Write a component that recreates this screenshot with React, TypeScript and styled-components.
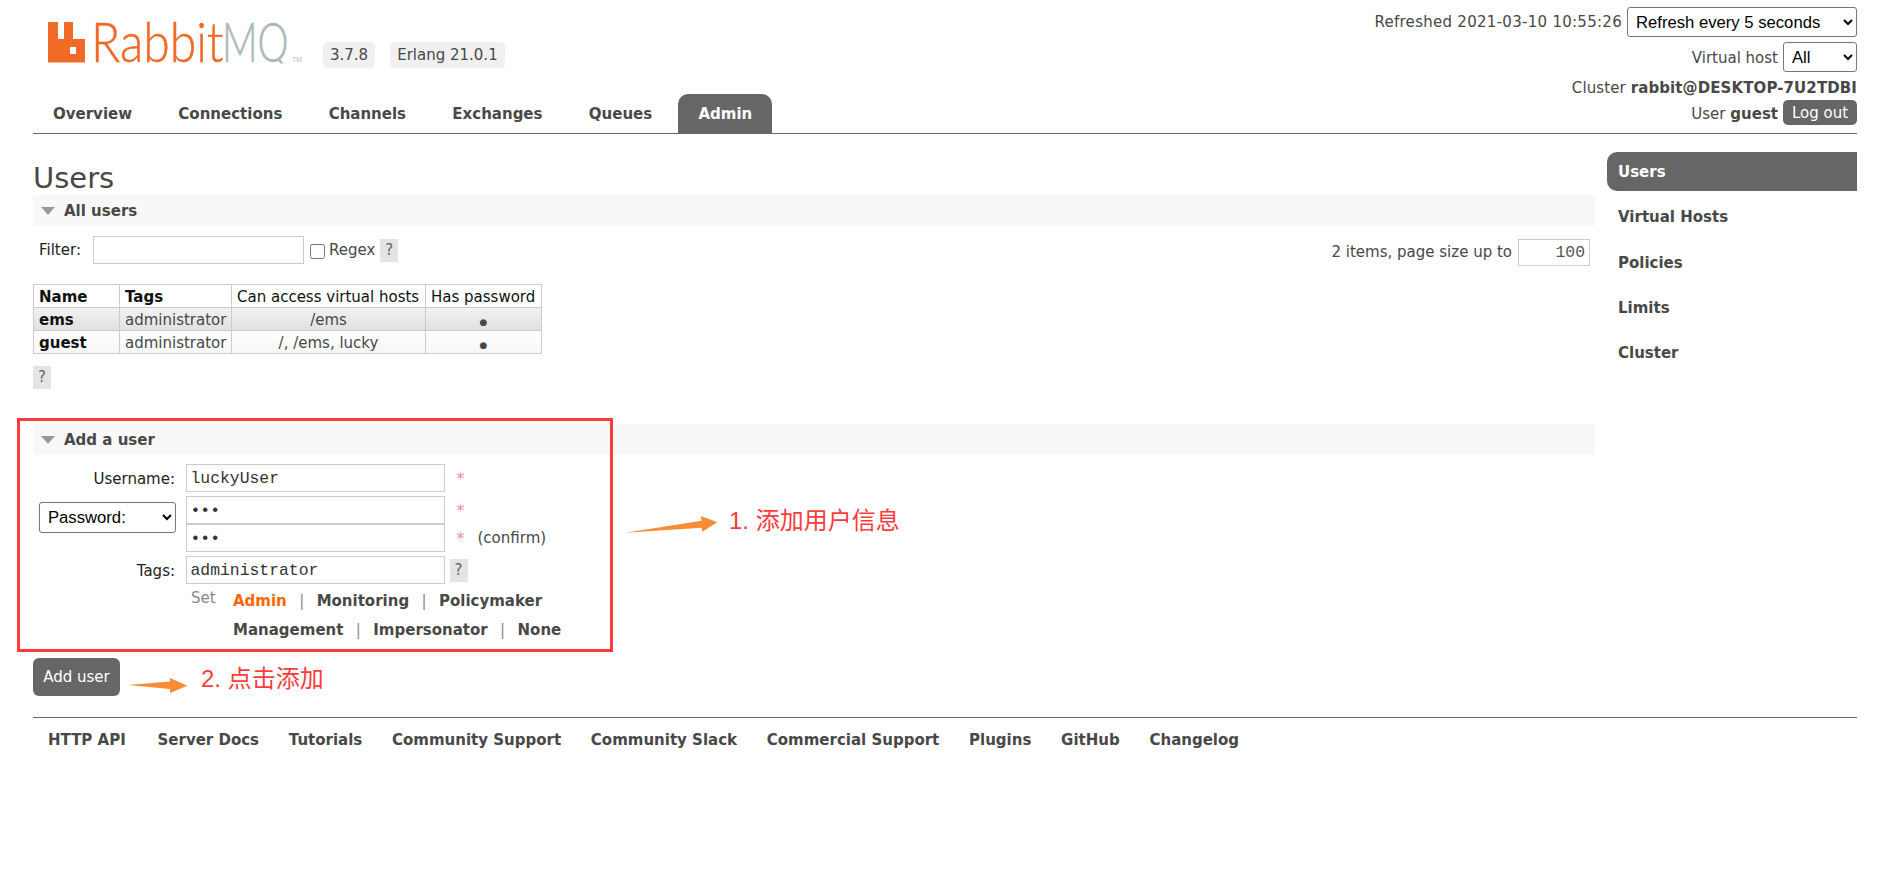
import React from "react";
import styled, { createGlobalStyle } from "styled-components";

const Global = createGlobalStyle`
  html, body { margin: 0; padding: 0; background: #fff; }
  body { font-family: "DejaVu Sans", Verdana, sans-serif; font-size: 15px; color: #484848; }
`;
const Page = styled.div`
  position: relative;
  padding: 0 35px 0 33px;
  height: 880px;
  box-sizing: border-box;
  overflow: hidden;
`;
const Header = styled.header`
  display: flex;
  justify-content: space-between;
  height: 133px;
  border-bottom: 1px solid #666;
`;
const Brand = styled.div`
  display: flex;
  flex-direction: column;
`;
const LogoRow = styled.div`
  display: flex;
  height: 46px;
  margin-top: 22px;
  padding-left: 15px;
`;
const LogoSvg = styled.svg`
  width: 260px;
  height: 46px;
  margin-right: 15px;
  overflow: visible;
`;
const Badge = styled.span`
  align-self: flex-end;
  height: 26px;
  line-height: 27px;
  padding: 0 7px;
  margin-right: 15px;
  border-radius: 5px;
  background: #f0f0f0;
`;
const Tabs = styled.nav`
  display: flex;
  gap: 6.3px;
  margin-top: 26px;
`;
const Tab = styled.a<{ $active?: boolean }>`
  height: 39px;
  line-height: 41px;
  padding: 0 20px;
  font-weight: bold;
  border-radius: 10px 10px 0 0;
  background: ${(p) => (p.$active ? "#666" : "transparent")};
  color: ${(p) => (p.$active ? "#fff" : "#484848")};
`;
const Session = styled.div`
  display: flex;
  flex-direction: column;
  align-items: flex-end;
  padding-top: 7px;
`;
const SessionLine = styled.div<{ $h: number; $mb?: number; $ls?: number }>`
  display: flex;
  align-items: center;
  gap: 5px;
  height: ${(p) => p.$h}px;
  margin-bottom: ${(p) => p.$mb ?? 0}px;
  letter-spacing: ${(p) => p.$ls ?? 0}px;
`;
const SessionText = styled.span`
  padding-top: 2px;
`;
const NativeSelect = styled.select<{ $w: number; $h?: number }>`
  width: ${(p) => p.$w}px;
  height: ${(p) => p.$h ?? 30}px;
  font-family: "Liberation Sans", Arial, sans-serif;
  font-size: 16.67px;
  letter-spacing: 0;
  color: #000;
  background: #fff;
  border: 1px solid #767676;
  border-radius: 3px;
  padding-left: 4px;
`;
const Strong = styled.b`
  font-weight: bold;
`;
const LogoutButton = styled.button`
  width: 74px;
  height: 25px;
  padding: 1px 0 0;
  border: 0;
  border-radius: 5px;
  background: #666;
  color: #fff;
  font: 15px "DejaVu Sans", Verdana, sans-serif;
`;
const Main = styled.main`
  display: flex;
  gap: 12px;
`;
const Content = styled.div`
  width: 1562px;
  flex: none;
`;
const Title = styled.h1`
  margin: 27px 0 0;
  font-size: 29px;
  line-height: 34px;
  font-weight: normal;
  color: #484848;
`;
const SectionHead = styled.h2<{ $mt?: number }>`
  display: flex;
  align-items: center;
  gap: 9px;
  height: 31px;
  margin: ${(p) => p.$mt ?? 0}px 0 0;
  padding-left: 8px;
  background: #f8f8f8;
  font-size: 15px;
  font-weight: bold;
  color: #484848;
`;
const Caret = styled.span`
  width: 0;
  height: 0;
  border-left: 7.5px solid transparent;
  border-right: 7.5px solid transparent;
  border-top: 8px solid #999;
`;
const FilterRow = styled.div`
  display: flex;
  align-items: center;
  justify-content: space-between;
  height: 30px;
  margin-top: 9px;
  padding: 0 5px 0 6px;
`;
const FilterLeft = styled.div`
  display: flex;
  align-items: center;
`;
const FilterLabel = styled.label`
  color: #222;
  margin-right: 12px;
`;
const TextInput = styled.input<{ $w: number; $h?: number; $mono?: boolean; $right?: boolean }>`
  box-sizing: border-box;
  width: ${(p) => p.$w}px;
  height: ${(p) => p.$h ?? 28}px;
  padding: 0 4px;
  border: 1px solid #ccc;
  background: #fff;
  color: ${(p) => (p.$right ? "#555" : "#333")};
  outline: none;
  text-align: ${(p) => (p.$right ? "right" : "left")};
  font: ${(p) => (p.$mono ? "16.4px \"Liberation Mono\", monospace" : "15px \"DejaVu Sans\", sans-serif")};
`;
const Check = styled.input`
  width: 15px;
  height: 15px;
  margin: 2px 4px 0 6px;
`;
const Help = styled.span<{ $ml?: number }>`
  display: inline-block;
  width: 18px;
  height: 23px;
  line-height: 23px;
  margin-left: ${(p) => p.$ml ?? 0}px;
  background: #e4e4e4;
  color: #666;
  text-align: center;
`;
const PageSize = styled.div`
  display: flex;
  align-items: center;
  gap: 6px;
  padding-top: 4px;
`;
const UsersTable = styled.table`
  border-collapse: collapse;
  margin-top: 19px;
  width: 508px;
  table-layout: fixed;
`;
const Th = styled.th<{ $plain?: boolean }>`
  height: 20px;
  padding: 2px 5px 0;
  border: 1px solid #ccc;
  text-align: left;
  white-space: nowrap;
  color: #111;
  font-weight: ${(p) => (p.$plain ? "normal" : "bold")};
`;
const Row = styled.tr<{ $shade: boolean }>`
  background: ${(p) =>
    p.$shade ? "linear-gradient(#f2f2f2, #e0e0e0)" : "linear-gradient(#fff, #f6f6f6)"};
`;
const Td = styled.td<{ $center?: boolean; $bold?: boolean }>`
  height: 20px;
  padding: 2px 5px 0;
  border: 1px solid #ccc;
  white-space: nowrap;
  text-align: ${(p) => (p.$center ? "center" : "left")};
  font-weight: ${(p) => (p.$bold ? "bold" : "normal")};
  color: ${(p) => (p.$bold ? "#111" : "#484848")};
`;
const Dot = styled.span`
  font-size: 9px;
`;
const TableHelp = styled.div`
  margin-top: 12px;
  height: 23px;
`;
const Form = styled.form`
  margin-top: 9px;
  display: flex;
  flex-direction: column;
  gap: 4px;
`;
const FormRow = styled.div`
  display: flex;
  align-items: center;
`;
const PasswordRow = styled.div`
  display: flex;
  align-items: flex-start;
`;
const FieldLabel = styled.label`
  width: 142px;
  margin-right: 10.5px;
  padding-top: 2px;
  text-align: right;
  color: #222;
  flex: none;
`;
const SelectCell = styled.div`
  width: 152.5px;
  padding: 6px 0 0 6px;
  box-sizing: border-box;
  flex: none;
`;
const Stack = styled.div`
  display: flex;
  flex-direction: column;
`;
const FieldLine = styled.div`
  display: flex;
  align-items: center;
`;
const Star = styled.span`
  margin-left: 12px;
  font-size: 16px;
  color: #f88;
`;
const Confirm = styled.span`
  margin-left: 13px;
  color: #484848;
`;
const TagArea = styled.div`
  display: flex;
  padding-left: 158px;
  height: 57px;
  margin-top: -1px;
`;
const SetLabel = styled.span`
  width: 42px;
  line-height: 22px;
  color: #888;
  flex: none;
`;
const TagLines = styled.div`
  display: flex;
  flex-direction: column;
`;
const TagLine = styled.div`
  display: flex;
  align-items: center;
  height: 29px;
`;
const TagLink = styled.a<{ $on?: boolean }>`
  font-weight: bold;
  color: ${(p) => (p.$on ? "#ff6600" : "#484848")};
`;
const Sep = styled.span`
  margin: 0 12.4px;
  color: #888;
`;
const AddButton = styled.button`
  display: block;
  margin-top: 14px;
  width: 87px;
  height: 38px;
  padding: 0;
  border: 0;
  border-radius: 6px;
  background: #666;
  color: #fff;
  font: 15px "DejaVu Sans", Verdana, sans-serif;
`;
const Side = styled.aside`
  width: 250px;
  flex: none;
  padding-top: 18px;
  display: flex;
  flex-direction: column;
  gap: 6.3px;
`;
const SideItem = styled.a<{ $active?: boolean }>`
  height: 39px;
  line-height: 41px;
  padding-left: 11px;
  font-weight: bold;
  border-radius: 10px 0 0 10px;
  background: ${(p) => (p.$active ? "#666" : "transparent")};
  color: ${(p) => (p.$active ? "#fff" : "#484848")};
`;
const Footer = styled.footer`
  display: flex;
  gap: 29.75px;
  margin-top: 21px;
  padding: 11px 0 0 15px;
  border-top: 1px solid #666;
`;
const FootLink = styled.a`
  font-weight: bold;
  color: #484848;
  line-height: 22px;
  &:first-child {
    margin-right: 2px;
  }
`;
const RedBox = styled.div`
  position: absolute;
  left: 17px;
  top: 418px;
  width: 596px;
  height: 234px;
  box-sizing: border-box;
  border: 3px solid #ff3b3b;
  pointer-events: none;
`;
const Arrow = styled.svg`
  position: absolute;
  left: 0;
  top: 0;
  width: 1000px;
  height: 800px;
  pointer-events: none;
`;
const Note = styled.div<{ $x: number; $y: number }>`
  position: absolute;
  left: ${(p) => p.$x}px;
  top: ${(p) => p.$y}px;
  font-family: "Liberation Sans", "Noto Sans CJK SC", sans-serif;
  font-size: 24px;
  line-height: 34px;
  white-space: nowrap;
  color: #ff3b3b;
`;

const tabs = ["Overview", "Connections", "Channels", "Exchanges", "Queues", "Admin"];
const sideItems = ["Users", "Virtual Hosts", "Policies", "Limits", "Cluster"];
const footLinks = ["HTTP API", "Server Docs", "Tutorials", "Community Support", "Community Slack", "Commercial Support", "Plugins", "GitHub", "Changelog"];
const users = [
  { name: "ems", tags: "administrator", hosts: "/ems" },
  { name: "guest", tags: "administrator", hosts: "/, /ems, lucky" },
];

export default function App() {
  return (
    <Page>
      <Global />
      <Header>
        <Brand>
          <LogoRow>
            <LogoSvg viewBox="0 0 260 46">
              <defs>
                <clipPath id="mq-baseline">
                  <rect x="170" y="-5" width="72" height="46.5" />
                </clipPath>
              </defs>
              <path
                fillRule="evenodd"
                fill="#f26a27"
                d="M0 0H10V17H16V0H25V17H37V40.5H0ZM22 25V32H28V25Z"
              />
              <text transform="translate(43 40) scale(0.86 1)" fontFamily="Lato, sans-serif" fontWeight="300" fontSize="56" stroke="#f26a27" strokeWidth="0.5" fill="#f26a27">Rabbit</text>
              <g clipPath="url(#mq-baseline)">
                <text transform="translate(174 40) scale(0.70 1)" fontFamily="Lato, sans-serif" fontWeight="300" fontSize="56" stroke="#a9b9b3" strokeWidth="0.5" fill="#a9b9b3">MQ</text>
              </g>
              <text x="244" y="40" fontFamily="'Liberation Sans', sans-serif" fontSize="7" fill="#bbb">TM</text>
            </LogoSvg>
            <Badge>3.7.8</Badge>
            <Badge>Erlang 21.0.1</Badge>
          </LogoRow>
          <Tabs>
            {tabs.map((t) => (
              <Tab key={t} $active={t === "Admin"}>{t}</Tab>
            ))}
          </Tabs>
        </Brand>
        <Session>
          <SessionLine $h={30} $mb={5} $ls={0.28}>
            <span>Refreshed 2021-03-10 10:55:26</span>
            <NativeSelect $w={230} defaultValue="5"><option value="5">Refresh every 5 seconds</option></NativeSelect>
          </SessionLine>
          <SessionLine $h={30} $mb={4}>
            <SessionText>Virtual host</SessionText>
            <NativeSelect $w={74} defaultValue="all"><option value="all">All</option></NativeSelect>
          </SessionLine>
          <SessionLine $h={24} $ls={0.1}>
            <span>Cluster <Strong>rabbit@DESKTOP-7U2TDBI</Strong></span>
          </SessionLine>
          <SessionLine $h={25}>
            <SessionText>User <Strong>guest</Strong></SessionText>
            <LogoutButton type="button">Log out</LogoutButton>
          </SessionLine>
        </Session>
      </Header>
      <Main>
        <Content>
          <Title>Users</Title>
          <SectionHead><Caret />All users</SectionHead>
          <FilterRow>
            <FilterLeft>
              <FilterLabel>Filter:</FilterLabel>
              <TextInput $w={211} />
              <Check type="checkbox" />
              <span>Regex</span>
              <Help $ml={5}>?</Help>
            </FilterLeft>
            <PageSize>
              2 items, page size up to
              <TextInput $w={72} $h={27} $mono $right defaultValue="100" />
            </PageSize>
          </FilterRow>
          <UsersTable>
            <colgroup>
              <col width="86" />
              <col width="112" />
              <col width="194" />
              <col width="116" />
            </colgroup>
            <thead>
              <tr>
                <Th>Name</Th>
                <Th>Tags</Th>
                <Th $plain>Can access virtual hosts</Th>
                <Th $plain>Has password</Th>
              </tr>
            </thead>
            <tbody>
              {users.map((u, i) => (
                <Row key={u.name} $shade={i === 0}>
                  <Td $bold>{u.name}</Td>
                  <Td>{u.tags}</Td>
                  <Td $center>{u.hosts}</Td>
                  <Td $center><Dot>●</Dot></Td>
                </Row>
              ))}
            </tbody>
          </UsersTable>
          <TableHelp><Help>?</Help></TableHelp>
          <SectionHead $mt={35}><Caret />Add a user</SectionHead>
          <Form onSubmit={(e) => e.preventDefault()}>
            <FormRow>
              <FieldLabel>Username:</FieldLabel>
              <TextInput $w={259} $mono defaultValue="luckyUser" />
              <Star>*</Star>
            </FormRow>
            <PasswordRow>
              <SelectCell>
                <NativeSelect $w={137} $h={31} defaultValue="p"><option value="p">Password:</option></NativeSelect>
              </SelectCell>
              <Stack>
                <FieldLine>
                  <TextInput $w={259} $mono type="password" defaultValue="123" />
                  <Star>*</Star>
                </FieldLine>
                <FieldLine>
                  <TextInput $w={259} $mono type="password" defaultValue="123" />
                  <Star>*</Star>
                  <Confirm>(confirm)</Confirm>
                </FieldLine>
              </Stack>
            </PasswordRow>
            <FormRow>
              <FieldLabel>Tags:</FieldLabel>
              <TextInput $w={259} $mono defaultValue="administrator" />
              <Help $ml={5}>?</Help>
            </FormRow>
            <TagArea>
              <SetLabel>Set</SetLabel>
              <TagLines>
                <TagLine>
                  <TagLink $on>Admin</TagLink><Sep>|</Sep><TagLink>Monitoring</TagLink><Sep>|</Sep><TagLink>Policymaker</TagLink>
                </TagLine>
                <TagLine>
                  <TagLink>Management</TagLink><Sep>|</Sep><TagLink>Impersonator</TagLink><Sep>|</Sep><TagLink>None</TagLink>
                </TagLine>
              </TagLines>
            </TagArea>
          </Form>
          <AddButton type="button">Add user</AddButton>
        </Content>
        <Side>
          {sideItems.map((s) => (
            <SideItem key={s} $active={s === "Users"}>{s}</SideItem>
          ))}
        </Side>
      </Main>
      <Footer>
        {footLinks.map((f) => (
          <FootLink key={f}>{f}</FootLink>
        ))}
      </Footer>
      <RedBox />
      <Arrow viewBox="0 0 1000 800">
        <polygon fill="#f98c38" points="625,532.8 701.7,520.7 700.7,516 717.3,522.3 702.3,531.7 701.7,527.8" />
        <polygon fill="#f98c38" points="128,685 170,681.5 170,678 187.5,685.7 170,693 170,689" />
      </Arrow>
      <Note $x={729} $y={504}>1. 添加用户信息</Note>
      <Note $x={201} $y={662}>2. 点击添加</Note>
    </Page>
  );
}
